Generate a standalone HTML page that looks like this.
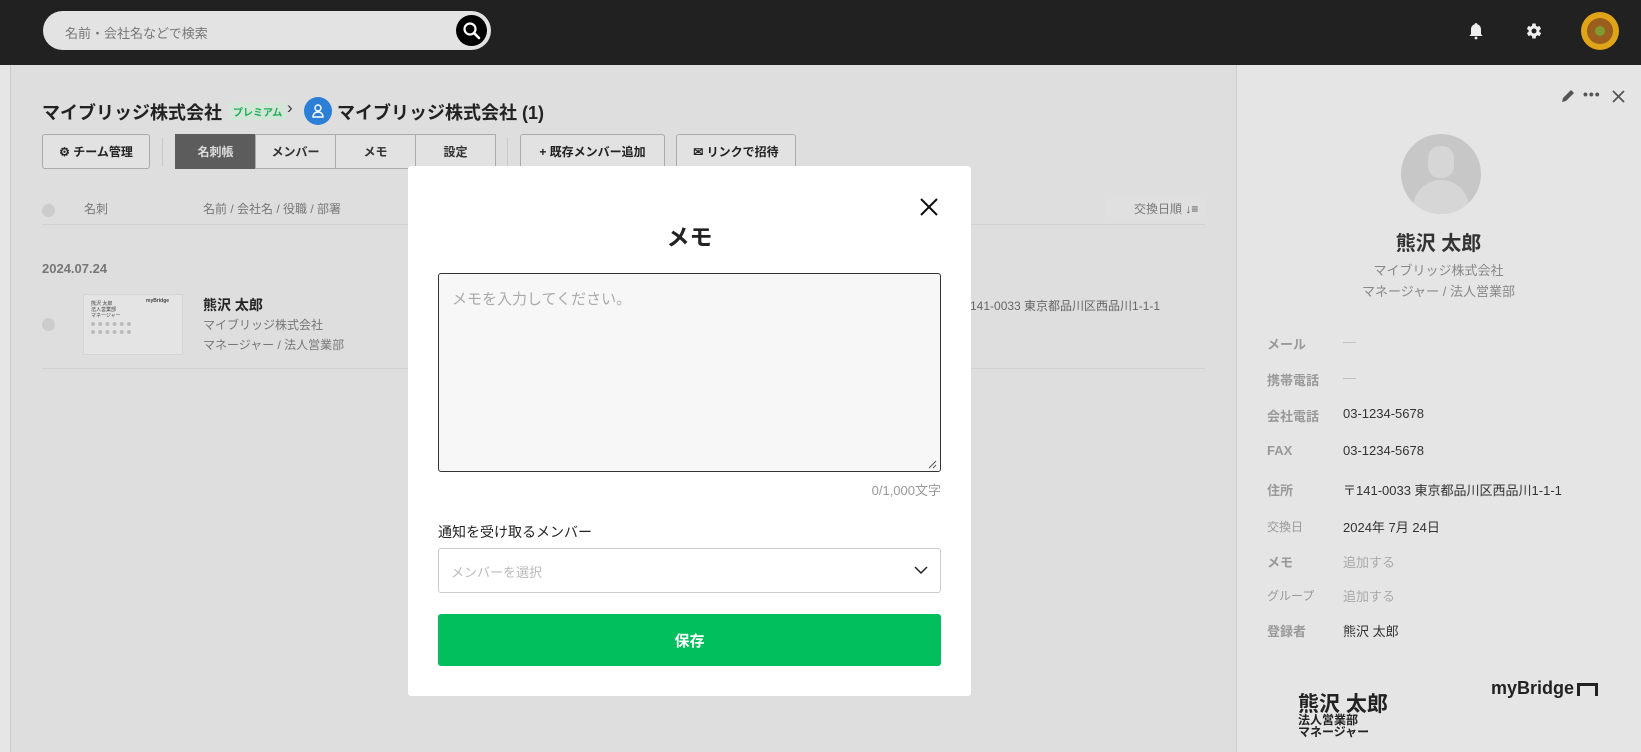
<!DOCTYPE html>
<html><head><meta charset="utf-8"><style>
*{box-sizing:border-box;margin:0;padding:0}
body{width:1641px;height:752px;overflow:hidden;background:#dedede;font-family:"Liberation Sans","Noto Sans CJK JP",sans-serif;position:relative;color:#222}
.a{position:absolute;white-space:nowrap}
.top{left:0;top:0;width:1641px;height:65px;background:#212121}
.btn{position:absolute;border:1px solid #aaa;background:#e2e2e2;border-radius:3px;font-size:12px;font-weight:bold;color:#222;display:flex;align-items:center;justify-content:center;height:35px;top:134px}
.tab{position:absolute;top:134px;height:35px;border:1px solid #aaa;background:#e2e2e2;font-size:12px;font-weight:bold;display:flex;align-items:center;justify-content:center;color:#333}
.lbl{position:absolute;left:1267px;font-size:13px;font-weight:bold;color:#999}
.val{position:absolute;left:1343px;font-size:13px;color:#333}
</style></head><body>
<div class="a top"></div>
<div class="a" style="left:43px;top:11px;width:448px;height:39px;border-radius:20px;background:#e3e3e3"></div>
<div class="a" style="left:65px;top:23px;font-size:13px;color:#777">名前・会社名などで検索</div>
<div class="a" style="left:456px;top:15px;width:31px;height:31px;border-radius:50%;background:#000"></div>
<svg class="a" style="left:462px;top:21px" width="20" height="20" viewBox="0 0 20 20"><circle cx="8" cy="8" r="5.5" stroke="#fff" stroke-width="2.2" fill="none"/><path d="M12 12l5 5" stroke="#fff" stroke-width="2.6" stroke-linecap="round"/></svg>
<svg class="a" style="left:1466px;top:21px" width="20" height="20" viewBox="0 0 20 20"><path d="M10 2c-.8 0-1.3.6-1.3 1.2C6.2 3.9 5 6 5 8.5V13l-1.6 2h13.2L15 13V8.5c0-2.5-1.2-4.6-3.7-5.3C11.3 2.6 10.8 2 10 2z" fill="#eee"/><circle cx="10" cy="17" r="1.4" fill="#eee"/></svg>
<svg class="a" style="left:1524px;top:21px" width="20" height="20" viewBox="0 0 24 24"><path fill="#eee" d="M19.4 13a7.5 7.5 0 000-2l2.1-1.6-2-3.5-2.5 1a7.3 7.3 0 00-1.7-1L15 3h-4l-.4 2.9a7.3 7.3 0 00-1.7 1l-2.5-1-2 3.5L6.6 11a7.5 7.5 0 000 2l-2.1 1.6 2 3.5 2.5-1c.5.4 1.1.7 1.7 1L11 21h4l.4-2.9c.6-.3 1.2-.6 1.7-1l2.5 1 2-3.5z" transform="translate(-1 0)"/><circle cx="12" cy="12" r="3" fill="#212121"/></svg>
<div class="a" style="left:1581px;top:12px;width:38px;height:38px;border-radius:50%;background:#e0a419"></div>
<div class="a" style="left:1587px;top:18px;width:26px;height:26px;border-radius:50%;background:#9b5e1c"></div>
<div class="a" style="left:1595px;top:26px;width:10px;height:10px;border-radius:50%;background:#7f9a30"></div>

<div class="a" style="left:0;top:65px;width:11px;height:687px;background:#e6e6e6;border-right:1px solid #ccc"></div>
<div class="a" style="left:1236px;top:65px;width:405px;height:687px;background:#e5e5e5;border-left:1px solid #cfcfcf"></div>

<div class="a" style="left:42px;top:99px;font-size:18px;font-weight:bold">マイブリッジ株式会社</div>
<div class="a" style="left:229px;top:103px;font-size:10px;font-weight:bold;color:#1fae5a;background:#d3e6d8;padding:1px 4px">プレミアム</div>
<div class="a" style="left:287px;top:98px;font-size:17px;color:#333">›</div>
<div class="a" style="left:304px;top:97px;width:28px;height:28px;border-radius:50%;background:#2c7fd6"></div>
<svg class="a" style="left:310px;top:103px" width="16" height="16" viewBox="0 0 16 16"><circle cx="8" cy="5" r="3" stroke="#fff" stroke-width="1.4" fill="none"/><path d="M3 14c0-3 2-5 5-5s5 2 5 5z" stroke="#fff" stroke-width="1.4" fill="none"/></svg>
<div class="a" style="left:337px;top:99px;font-size:18px;font-weight:bold">マイブリッジ株式会社 (1)</div>

<div class="btn" style="left:42px;width:108px">⚙ チーム管理</div>
<div class="a" style="left:162px;top:138px;width:1px;height:28px;background:#c8c8c8"></div>
<div class="tab" style="left:175px;width:81px;background:#5c5c5c;color:#ddd;border-color:#5c5c5c">名刺帳</div>
<div class="tab" style="left:255px;width:81px">メンバー</div>
<div class="tab" style="left:335px;width:81px">メモ</div>
<div class="tab" style="left:415px;width:81px">設定</div>
<div class="a" style="left:507px;top:138px;width:1px;height:28px;background:#c8c8c8"></div>
<div class="btn" style="left:520px;width:145px">+ 既存メンバー追加</div>
<div class="btn" style="left:676px;width:120px">✉ リンクで招待</div>

<div class="a" style="left:42px;top:204px;width:13px;height:13px;border-radius:50%;background:#ccc"></div>
<div class="a" style="left:84px;top:200px;font-size:12px;color:#777">名刺</div>
<div class="a" style="left:203px;top:200px;font-size:12px;color:#777">名前 / 会社名 / 役職 / 部署</div>
<div class="a" style="left:1105px;top:199px;width:100px;height:18px;background:#e0e0e0"></div>
<div class="a" style="left:1134px;top:200px;font-size:12px;color:#777">交換日順 <b style="color:#555">↓≡</b></div>
<div class="a" style="left:42px;top:224px;width:1163px;height:1px;background:#d2d2d2"></div>
<div class="a" style="left:42px;top:261px;font-size:13px;font-weight:bold;color:#777">2024.07.24</div>
<div class="a" style="left:42px;top:318px;width:13px;height:13px;border-radius:50%;background:#ccc"></div>
<div class="a" style="left:83px;top:294px;width:100px;height:61px;background:#e4e4e4;border:1px solid #d4d4d4"></div>
<div class="a" style="left:91px;top:301px;font-size:5px;color:#444;line-height:6px">熊沢 太郎<br>法人営業部<br>マネージャー</div>
<div class="a" style="left:146px;top:298px;font-size:5px;font-weight:bold;color:#444">myBridge</div>
<div class="a" style="left:91px;top:322px;width:40px;height:12px;border-top:4px dotted #bbb;border-bottom:4px dotted #bbb"></div>
<div class="a" style="left:203px;top:295px;font-size:14px;font-weight:bold">熊沢 太郎</div>
<div class="a" style="left:203px;top:316px;font-size:12px;color:#777">マイブリッジ株式会社</div>
<div class="a" style="left:203px;top:336px;font-size:12px;color:#777">マネージャー / 法人営業部</div>
<div class="a" style="left:970px;top:297px;font-size:12px;color:#666">141-0033 東京都品川区西品川1-1-1</div>
<div class="a" style="left:42px;top:368px;width:1163px;height:1px;background:#d2d2d2"></div>

<!-- modal -->
<div class="a" style="left:408px;top:166px;width:563px;height:530px;background:#fff;border-radius:3px"></div>
<svg class="a" style="left:919px;top:197px" width="20" height="20" viewBox="0 0 20 20"><path d="M2 2l16 16M18 2L2 18" stroke="#111" stroke-width="2"/></svg>
<div class="a" style="left:408px;top:218px;width:563px;text-align:center;font-size:23px;font-weight:bold">メモ</div>
<div class="a" style="left:438px;top:273px;width:503px;height:199px;background:#f7f7f7;border:1px solid #333;border-radius:3px"></div>
<div class="a" style="left:452px;top:288px;font-size:15px;color:#aaa">メモを入力してください。</div>
<svg class="a" style="left:927px;top:459px" width="10" height="10"><path d="M9 2L2 9M9 6L6 9" stroke="#555"/></svg>
<div class="a" style="left:600px;top:480px;width:341px;text-align:right;font-size:13px;color:#999">0/1,000文字</div>
<div class="a" style="left:438px;top:522px;font-size:14px;color:#222">通知を受け取るメンバー</div>
<div class="a" style="left:438px;top:548px;width:503px;height:45px;border:1px solid #ccc;border-radius:3px"></div>
<div class="a" style="left:451px;top:562px;font-size:13px;color:#bbb">メンバーを選択</div>
<svg class="a" style="left:914px;top:565px" width="14" height="10"><path d="M1 2l6 6 6-6" stroke="#222" stroke-width="1.5" fill="none"/></svg>
<div class="a" style="left:438px;top:614px;width:503px;height:52px;background:#00bf5c;border-radius:3px;color:#fff;font-size:15px;font-weight:bold;display:flex;align-items:center;justify-content:center">保存</div>

<!-- right panel -->
<svg class="a" style="left:1561px;top:89px" width="14" height="14" viewBox="0 0 14 14"><path d="M1 13l1-4 8-8 3 3-8 8z" fill="#555"/></svg>
<div class="a" style="left:1583px;top:86px;font-size:14px;font-weight:bold;color:#555;letter-spacing:1px">•••</div>
<svg class="a" style="left:1612px;top:90px" width="13" height="13"><path d="M1 1l11 11M12 1L1 12" stroke="#555" stroke-width="1.8"/></svg>
<div class="a" style="left:1401px;top:134px;width:80px;height:80px;border-radius:50%;background:#c7c7c7;overflow:hidden"><div style="position:absolute;left:27px;top:12px;width:26px;height:32px;border-radius:12px;background:#d6d6d6"></div><div style="position:absolute;left:12px;top:46px;width:56px;height:40px;border-radius:28px 28px 0 0;background:#d6d6d6"></div></div>
<div class="a" style="left:1236px;top:227px;width:405px;text-align:center;font-size:20px;font-weight:bold;color:#333">熊沢 太郎</div>
<div class="a" style="left:1236px;top:260px;width:405px;text-align:center;font-size:13px;color:#888">マイブリッジ株式会社</div>
<div class="a" style="left:1236px;top:281px;width:405px;text-align:center;font-size:13px;color:#888">マネージャー / 法人営業部</div>
<div class="lbl" style="top:334px">メール</div><div class="val" style="top:334px;color:#bbb">—</div>
<div class="lbl" style="top:370px">携帯電話</div><div class="val" style="top:370px;color:#bbb">—</div>
<div class="lbl" style="top:406px">会社電話</div><div class="val" style="top:406px">03-1234-5678</div>
<div class="lbl" style="top:443px">FAX</div><div class="val" style="top:443px">03-1234-5678</div>
<div class="lbl" style="top:480px">住所</div><div class="val" style="top:480px">〒141-0033 東京都品川区西品川1-1-1</div>
<div class="lbl" style="top:518px;font-weight:normal;font-size:12px">交換日</div><div class="val" style="top:517px">2024年 7月 24日</div>
<div class="lbl" style="top:552px">メモ</div><div class="val" style="top:552px;color:#aaa">追加する</div>
<div class="lbl" style="top:587px;font-weight:normal;font-size:12px">グループ</div><div class="val" style="top:586px;color:#aaa">追加する</div>
<div class="lbl" style="top:621px">登録者</div><div class="val" style="top:621px">熊沢 太郎</div>
<div class="a" style="left:1298px;top:688px;font-size:21px;font-weight:bold;color:#222">熊沢 太郎</div>
<div class="a" style="left:1298px;top:714px;font-size:12px;font-weight:bold;color:#222;line-height:12px">法人営業部<br>マネージャー</div>
<div class="a" style="left:1491px;top:678px;font-size:18px;font-weight:bold;color:#222">myBridge</div>
<div class="a" style="left:1577px;top:683px;width:21px;height:13px;border:3px solid #222;border-bottom:none"></div>
</body></html>
